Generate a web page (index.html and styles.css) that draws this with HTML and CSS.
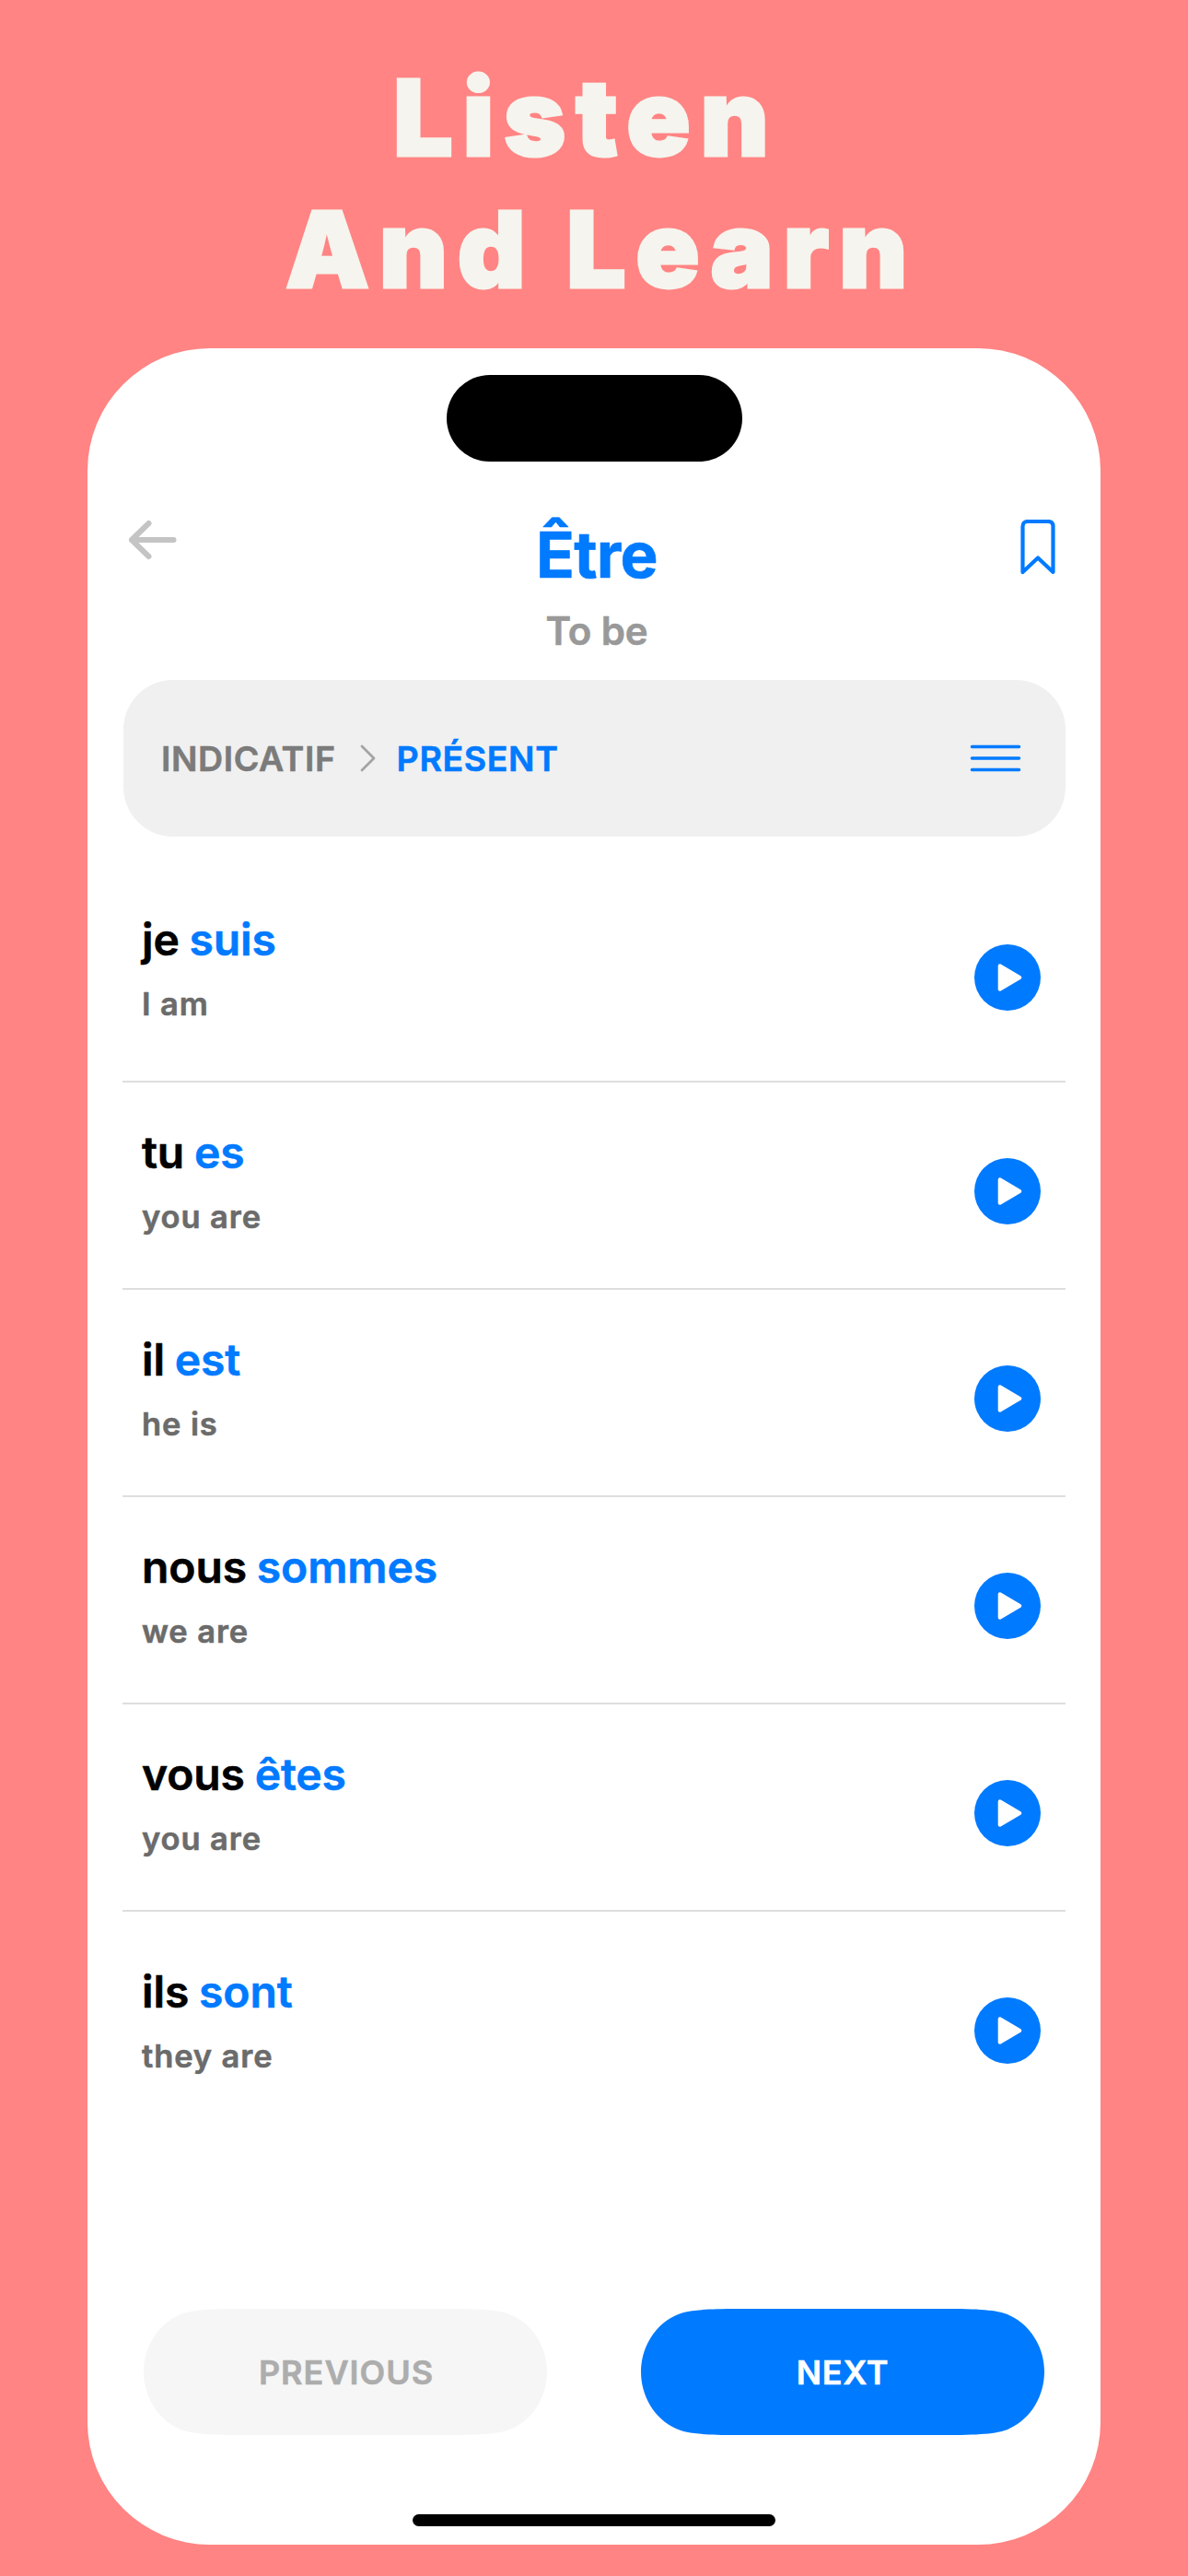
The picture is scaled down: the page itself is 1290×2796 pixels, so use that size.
FILE: index.html
```
<!DOCTYPE html>
<html lang="en">
<head>
<meta charset="utf-8">
<title>Être – Présent</title>
<link rel="stylesheet" href="styles.css">
</head>
<body>
<svg width="0" height="0" class="defs" aria-hidden="true">
  <symbol id="play" viewBox="0 0 72 72">
    <circle cx="36" cy="36" r="36" fill="#007aff"/>
    <path d="M27.7 23.3 49.3 36 27.7 48.7Z" fill="#fff" stroke="#fff" stroke-width="4" stroke-linejoin="round"/>
  </symbol>
</svg>
<h1 class="headline">Listen 
And Learn</h1>
<main class="phone">
  <div class="island"></div>
  <header class="header">
    <svg class="back" width="53" height="44" viewBox="0 0 53 44" fill="none" stroke="#c4c4c4" stroke-width="6" stroke-linecap="round" stroke-linejoin="round"><path d="M22.5 4 4 22 22.5 40M4 22H49.5"/></svg>
    <div class="verb">
      <h2 class="verb-name">Être</h2>
      <p class="verb-meaning">To be</p>
    </div>
    <svg class="bookmark" width="38" height="60" viewBox="0 0 38 60" fill="none" stroke="#007aff" stroke-width="4.2" stroke-linejoin="round"><path d="M2.5 57V7.5Q2.5 2 8 2H30Q35.5 2 35.5 7.5V57L19 41.5Z"/></svg>
  </header>
  <nav class="tense">
    <span class="mood">INDICATIF</span>
    <svg class="chevron" width="17" height="30" viewBox="0 0 17 30" fill="none" stroke="#a4a4a4" stroke-width="2.8" stroke-linecap="round" stroke-linejoin="round"><path d="M2 2 15 15 2 28"/></svg>
    <span class="tense-name">PRÉSENT</span>
    <svg class="menu" width="56" height="30" viewBox="0 0 56 30" fill="none" stroke="#007aff" stroke-width="3.6" stroke-linecap="round"><path d="M2.5 2.5H53.5M2.5 15H53.5M2.5 27.5H53.5"/></svg>
  </nav>
  <section class="list">
    <div class="row row-first"><div><p class="form">je <b>suis</b></p><p class="gloss">I am</p></div><svg class="play"><use href="#play"/></svg></div>
    <div class="row"><div><p class="form">tu <b>es</b></p><p class="gloss">you are</p></div><svg class="play"><use href="#play"/></svg></div>
    <div class="row"><div><p class="form">il <b>est</b></p><p class="gloss">he is</p></div><svg class="play"><use href="#play"/></svg></div>
    <div class="row"><div><p class="form">nous <b>sommes</b></p><p class="gloss">we are</p></div><svg class="play"><use href="#play"/></svg></div>
    <div class="row"><div><p class="form">vous <b>êtes</b></p><p class="gloss">you are</p></div><svg class="play"><use href="#play"/></svg></div>
    <div class="row row-last"><div><p class="form">ils <b>sont</b></p><p class="gloss">they are</p></div><svg class="play"><use href="#play"/></svg></div>
  </section>
  <footer class="footer">
    <button class="button button-previous">PREVIOUS</button>
    <button class="button button-next">NEXT</button>
  </footer>
  <div class="home-indicator"></div>
</main>
</body>
</html>
```
FILE: styles.css
```
* { box-sizing: border-box; margin: 0; padding: 0; }

body {
  width: 1290px;
  height: 2796px;
  overflow: hidden;
  background: #ff8483;
  font-family: Inter, "Liberation Sans", sans-serif;
  font-weight: 600;
  -webkit-text-stroke: 0.6px currentColor;
}

.defs { display: block; }

.headline {
  padding: 56px 0 0 16px;
  color: #f6f4ee;
  font-size: 114.5px;
  font-weight: 900;
  line-height: 143px;
  letter-spacing: 10.7px;
  text-align: center;
  white-space: break-spaces;
  -webkit-text-stroke-width: 3px;
}

.phone {
  display: flex;
  flex-direction: column;
  width: 1100px;
  height: 2384px;
  margin: 36px auto 0;
  padding: 29px 0 20px;
  border-radius: 133px;
  background: #fff;
}

.island {
  flex: none;
  align-self: center;
  width: 321px;
  height: 94px;
  border-radius: 47px;
  background: #000;
}

.header {
  display: grid;
  grid-template-columns: 1fr auto 1fr;
  align-items: start;
  height: 237px;
  padding: 59px 38px 0 44px;
}

.back { margin-top: 4px; }

.verb { text-align: center; }

.verb-name {
  color: #007aff;
  font-size: 69px;
  font-weight: 700;
  line-height: 85px;
  letter-spacing: -0.7px;
}

.verb-meaning {
  margin-top: 15px;
  color: #999;
  font-size: 42px;
  line-height: 50px;
  letter-spacing: -0.1px;
}

.bookmark { justify-self: end; margin: 4px 11px 0 0; }

.tense {
  display: flex;
  align-items: center;
  flex: none;
  height: 170px;
  margin: 0 38px 0 38.5px;
  padding: 0 48px 0 41.5px;
  border-radius: 54px;
  background: #f0f0f0;
  font-size: 37.5px;
  letter-spacing: 0.6px;
}

.mood { color: #7b7b7b; }
.chevron { margin: 0 23px 0 26px; }
.tense-name { color: #007aff; }
.menu { margin-left: auto; }

.list { margin: 0 38px; }

.row {
  display: flex;
  justify-content: space-between;
  height: 225px;
  padding: 42px 27px 0 21px;
  border-bottom: 2px solid #dedede;
}

.row-first { height: 267px; padding-top: 78px; }
.row-first .play { margin-top: 39px; }
.row-last { padding-top: 53px; border-bottom: 0; }

.form {
  color: #000;
  font-size: 48px;
  line-height: 68px;
  letter-spacing: -0.1px;
  word-spacing: -1.2px;
}

.form b { color: #007aff; font-weight: 600; }

.gloss {
  margin-top: 15px;
  color: #6b6b6b;
  font-size: 34.5px;
  line-height: 42px;
  letter-spacing: 0.9px;
}

.play { width: 72px; height: 72px; margin-top: 40px; }

.footer {
  display: flex;
  justify-content: space-between;
  margin: auto 61px 0;
}

.button {
  width: 438px;
  height: 137px;
  border: 0;
  clip-path: path("M0 68.5C0 43 14 18 38 7C48 2 66 0 104 0H334C372 0 390 2 400 7C424 18 438 43 438 68.5C438 94 424 119 400 130C390 135 372 137 334 137H104C66 137 48 135 38 130C14 119 0 94 0 68.5Z");
  font: inherit;
  font-size: 36px;
}

.button-previous { padding-left: 2px; background: #f6f6f6; color: #adadad; letter-spacing: 1px; }
.button-next { background: #007aff; color: #fff; letter-spacing: 0.8px; }

.home-indicator {
  flex: none;
  align-self: center;
  width: 394px;
  height: 13px;
  margin-top: 86px;
  border-radius: 6.5px;
  background: #000;
}
```
